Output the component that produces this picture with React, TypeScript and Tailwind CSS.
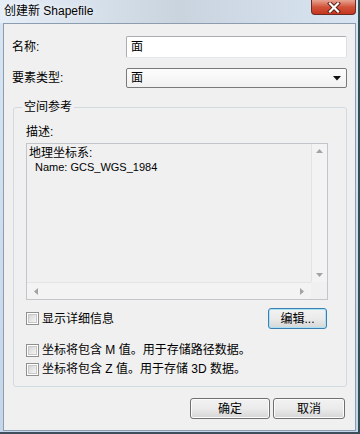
import React from "react";

function CheckBox() {
  return (
    <div className="w-[13px] h-[13px] border border-[#8e8f8f] bg-white p-[1px] shrink-0">
      <div className="w-full h-full bg-gradient-to-br from-[#d6d6d6] to-[#f5f5f5] border border-[#c8c8c8]" />
    </div>
  );
}

function WinButton({ label, w, focused }: { label: string; w: string; focused?: boolean }) {
  return (
    <div
      className={`${w} h-[21px] rounded-[3px] border ${
        focused ? "border-[#3c7fb1] shadow-[inset_0_0_0_1px_#a8e2f6]" : "border-[#707070] shadow-[inset_0_0_0_1px_#fcfcfc]"
      } bg-gradient-to-b from-[#f2f2f2] via-[#ebebeb] to-[#d6d6d6] flex items-center justify-center text-[12px] text-black leading-none`}
    >
      {label}
    </div>
  );
}

export default function App() {
  return (
    <div className="w-[360px] h-[434px] bg-gradient-to-b from-[#d9e5f2] to-[#c5d6ea] font-['Liberation_Sans','Noto_Sans_CJK_SC',sans-serif] text-black overflow-hidden border-r-2 border-b-2 border-r-[#2f4f52] border-b-[#3d4f5c]">
      {/* Title bar */}
      <div className="h-[23px] flex items-start bg-gradient-to-r from-[#e6eef8] via-[#c9d4df] to-[#d8e4f1]">
        <div className="pl-[4px] pt-[3px] text-[12px] leading-[16px] text-black [text-shadow:0_0_6px_#ffffff]">
          创建新 Shapefile
        </div>
        <div className="ml-auto mr-[2px] w-[45px] h-[15px] rounded-b-[4px] border border-t-0 border-[#6b2b22] bg-gradient-to-b from-[#e8a493] via-[#d0533a] to-[#c7361e] flex items-center justify-center">
          <svg width="14" height="11" viewBox="0 0 14 11">
            <path d="M3 1.5 L11 9.5 M11 1.5 L3 9.5" stroke="#5a1d12" strokeWidth="4" strokeLinecap="square" />
            <path d="M3 1.5 L11 9.5 M11 1.5 L3 9.5" stroke="#ffffff" strokeWidth="2.2" strokeLinecap="square" />
          </svg>
        </div>
      </div>

      {/* Client area */}
      <div className="ml-[3px] w-[353px] h-[408px] border border-[#8d9db0] bg-[#f0f0f0] text-[12px]">
        {/* Name row */}
        <div className="mt-[12px] flex items-center h-[22px]">
          <div className="pl-[8px] w-[122px] leading-[16px]">名称:</div>
          <div className="w-[221px] h-[22px] border border-[#abadb3] border-b-[#e3e9ef] border-r-[#dbdfe6] rounded-[2px] bg-white flex items-center pl-[4px] leading-[16px]">
            面
          </div>
        </div>
        {/* Type row */}
        <div className="mt-[10px] flex items-center h-[20px]">
          <div className="pl-[8px] w-[122px] leading-[16px]">要素类型:</div>
          <div className="w-[221px] h-[20px] border border-[#7a7a7a] rounded-[2px] bg-gradient-to-b from-[#fdfdfd] to-[#f1f1f1] flex items-center pl-[4px] pr-[5px] leading-[16px]">
            <span>面</span>
            <svg className="ml-auto" width="8" height="5" viewBox="0 0 8 5">
              <path d="M0 0 H8 L4 4.5 Z" fill="#111" />
            </svg>
          </div>
        </div>

        {/* Group box */}
        <div className="relative mt-[19px] ml-[9px] w-[334px] h-[280px] border border-[#d0dae1] rounded-[3px]">
          <div className="absolute top-[-9px] left-[8px] px-[2px] bg-[#f0f0f0] leading-[16px]">空间参考</div>
          <div className="mt-[16px] ml-[12px] leading-[16px]">描述:</div>
          {/* Description box */}
          <div className="mt-[3px] ml-[12px] w-[302px] h-[157px] border border-[#c2c6ca] bg-[#f0f0f0] flex flex-col">
            <div className="flex flex-1 min-h-0">
              <div className="flex-1 pl-[2px] pt-[2px] leading-[14px]">
                <div className="text-[12px]">地理坐标系:</div>
                <div className="pl-[6px] text-[11px]">Name: GCS_WGS_1984</div>
              </div>
              {/* vertical scrollbar */}
              <div className="w-[16px] border-l border-[#e4e4e4] bg-[#f3f3f3] flex flex-col items-center justify-between py-[5px]">
                <svg width="7" height="4" viewBox="0 0 7 4"><path d="M0 4 L3.5 0 L7 4 Z" fill="#a3a3a3" /></svg>
                <svg width="7" height="4" viewBox="0 0 7 4"><path d="M0 0 L7 0 L3.5 4 Z" fill="#a3a3a3" /></svg>
              </div>
            </div>
            <div className="flex h-[17px]">
              <div className="flex-1 border-t border-[#e4e4e4] bg-[#f3f3f3] flex items-center justify-between px-[7px]">
                <svg width="4" height="7" viewBox="0 0 4 7"><path d="M4 0 L0 3.5 L4 7 Z" fill="#a3a3a3" /></svg>
                <svg width="4" height="7" viewBox="0 0 4 7"><path d="M0 0 L4 3.5 L0 7 Z" fill="#a3a3a3" /></svg>
              </div>
              <div className="w-[16px] bg-[#f0f0f0]" />
            </div>
          </div>

          {/* show details row */}
          <div className="mt-[9px] flex items-center h-[19px] ml-[12px]">
            <CheckBox />
            <span className="ml-[3px] leading-[16px]">显示详细信息</span>
            <div className="ml-auto mr-[19px]">
              <WinButton label="编辑..." w="w-[59px]" focused />
            </div>
          </div>

          <div className="mt-[14px] flex items-center h-[16px] ml-[12px]">
            <CheckBox />
            <span className="ml-[3px] leading-[16px]">坐标将包含 M 值。用于存储路径数据。</span>
          </div>
          <div className="mt-[3px] flex items-center h-[16px] ml-[12px]">
            <CheckBox />
            <span className="ml-[3px] leading-[16px]">坐标将包含 Z 值。用于存储 3D 数据。</span>
          </div>
        </div>

        {/* Bottom buttons */}
        <div className="mt-[11px] flex justify-end gap-[3px] pr-[10px]">
          <WinButton label="确定" w="w-[80px]" />
          <WinButton label="取消" w="w-[72px]" />
        </div>
      </div>
    </div>
  );
}
